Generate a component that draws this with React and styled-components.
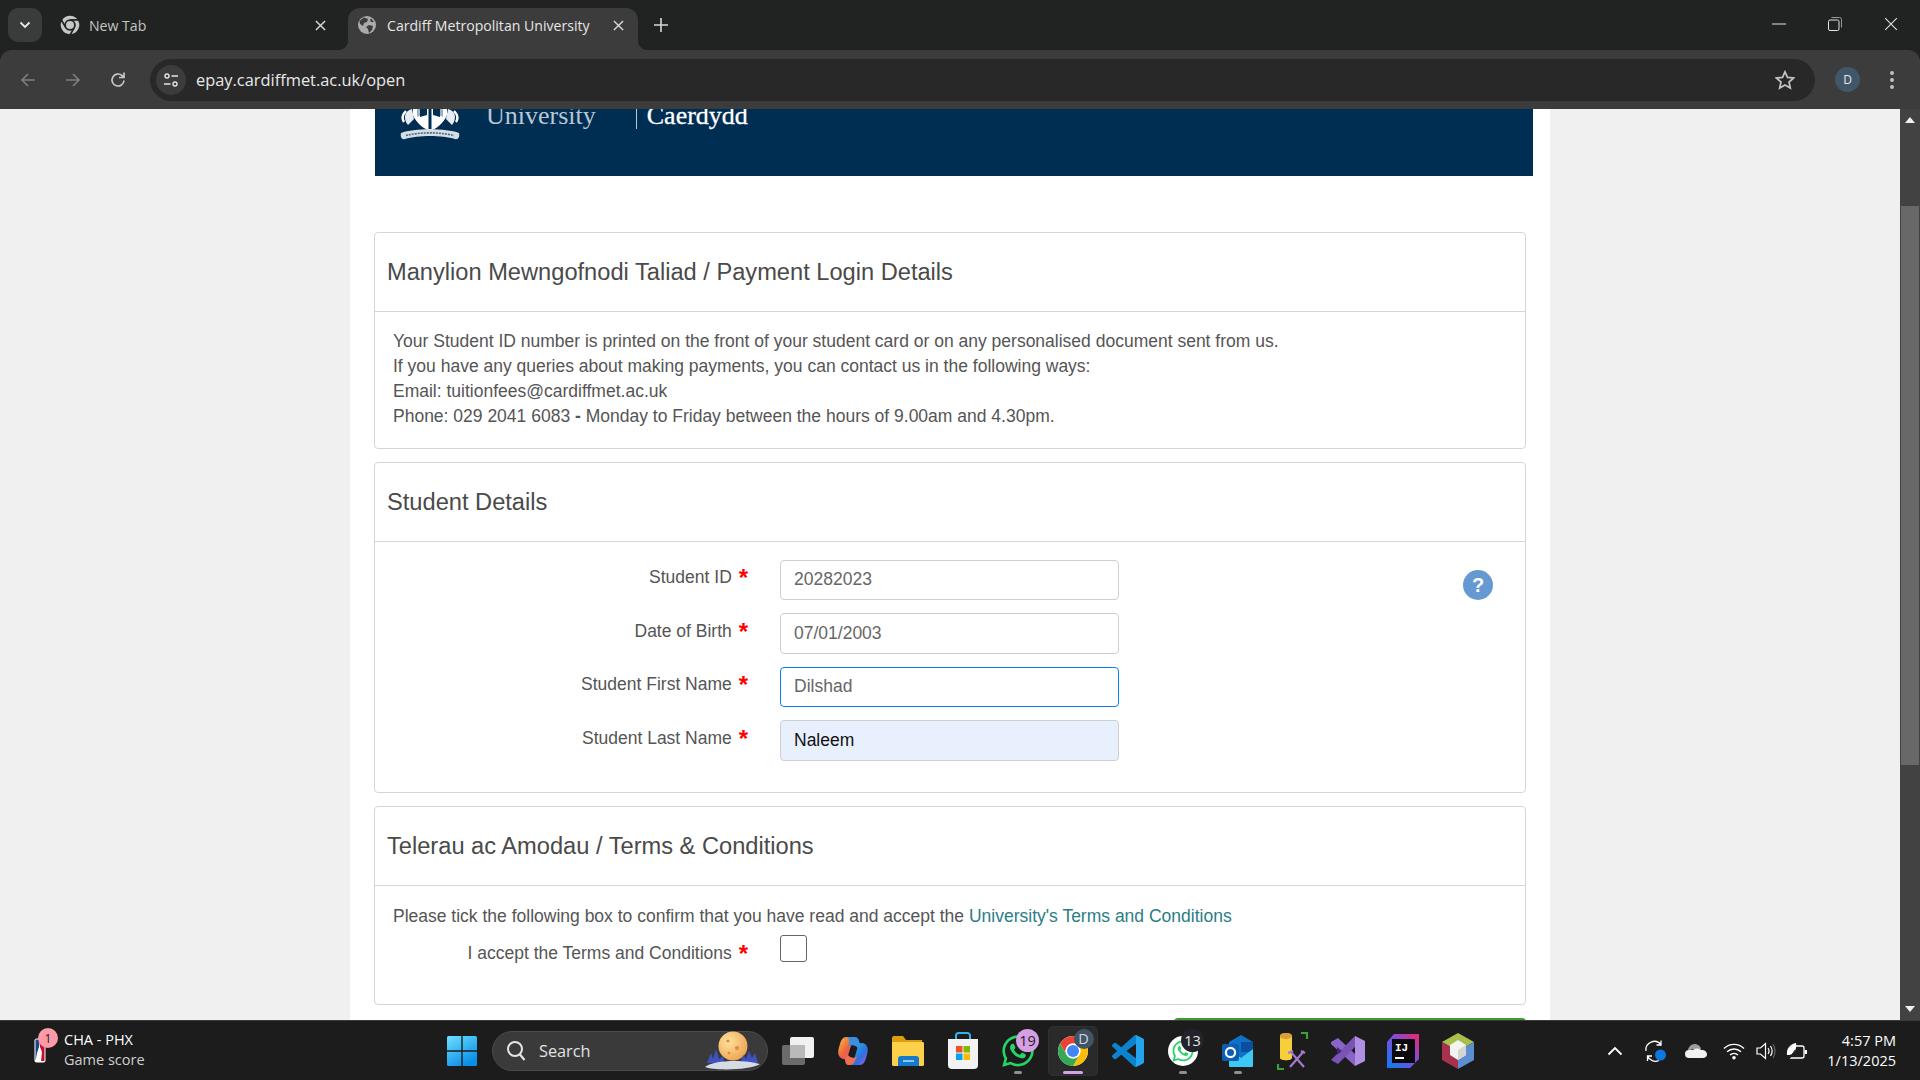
import styled, { createGlobalStyle } from "styled-components";
import { FaWhatsapp } from "react-icons/fa";

const GlobalStyle = createGlobalStyle`
  html, body {
    margin: 0;
    padding: 0;
    height: 100%;
    overflow: hidden;
    font-family: "Liberation Sans", Arial, sans-serif;
  }
  * { box-sizing: border-box; }
`;

const UI_FONT = `"Open Sans", "Noto Sans", sans-serif`;

/* ---------- small drawings ---------- */

function ChromeLogo({ size = 30, red = "#ea4335", yellow = "#fbbc04", green = "#34a853", blue = "#4285f4", ring = "#fff", seam }) {
  const sector = "M41.32 14A20 20 0 0 0 6.68 14L15.34 29A10 10 0 0 1 24 14Z";
  const seamProps = seam ? { stroke: ring, strokeWidth: seam } : {};
  return (
    <svg width={size} height={size} viewBox="0 0 48 48">
      <circle cx="24" cy="24" r="20" fill={ring} />
      <path d={sector} fill={red} {...seamProps} />
      <path d={sector} fill={yellow} transform="rotate(120 24 24)" {...seamProps} />
      <path d={sector} fill={green} transform="rotate(240 24 24)" {...seamProps} />
      <circle cx="24" cy="24" r="10" fill={ring} />
      <circle cx="24" cy="24" r="8" fill={blue} />
    </svg>
  );
}

function GlobeFavicon() {
  return (
    <svg width="18" height="18" viewBox="0 0 18 18">
      <circle cx="9" cy="9" r="9" fill="#a9abad" />
      <path d="M6 1.5 10 3 9 6 6 7 5 10 2 8 1.5 5ZM11 9l4 1-1 4-3 3-1-4-2-2ZM13 2.5 16 6l-3 0-1-2Z" fill="#3c3c3c" />
    </svg>
  );
}

function CloseX({ size = 11, color = "#d8d8d8", width = 1.6 }) {
  return (
    <svg width={size} height={size} viewBox="0 0 12 12">
      <path d="M1 1 11 11M11 1 1 11" stroke={color} strokeWidth={width} fill="none" />
    </svg>
  );
}

function Arrow({ flip, color = "#7d7d7d" }) {
  return (
    <svg width="18" height="18" viewBox="0 0 18 18" style={flip ? { transform: "scaleX(-1)" } : undefined}>
      <path d="M16 9H3M9 3 3 9l6 6" stroke={color} strokeWidth="1.7" fill="none" />
    </svg>
  );
}

function Crest() {
  return (
    <svg width="60" height="62" viewBox="0 0 60 62">
      <path d="M13 0H47V36C44 44 36 50 30 52 24 50 16 44 13 36Z" fill="#fff" />
      <path d="M30 0V50" stroke="#002d52" strokeWidth="3" />
      <path d="M17 22 26 30 26 34 17 38ZM43 22 34 30 34 34 43 38Z" fill="#9fb2c3" />
      <path d="M20 28 27 24V36L20 38ZM40 28 33 24V36L40 38Z" fill="#002d52" />
      <path d="M12 30C4 32 3 40 8 46L14 40ZM48 30C56 32 57 40 52 46L46 40Z" fill="#e6ecf1" />
      <path d="M6 32C2 36 2 40 4 43M54 32C58 36 58 40 56 43" stroke="#fff" strokeWidth="2.4" fill="none" />
      <path d="M1 54C14 49 46 49 59 54 60 58 58 61 55 60 42 56 18 56 5 60 2 61 0 58 1 54Z" fill="#d5dde4" />
      <path d="M6 56.5C20 53 40 53 54 56.5" stroke="#4c6a84" strokeWidth="1.6" strokeDasharray="2 1" fill="none" />
    </svg>
  );
}

function WindowsLogo() {
  return (
    <svg width="30" height="30" viewBox="0 0 30 30">
      <defs>
        <linearGradient id="win" x1="0" y1="0" x2="0.6" y2="1">
          <stop offset="0" stopColor="#6fe0ff" />
          <stop offset="1" stopColor="#0a8fe8" />
        </linearGradient>
      </defs>
      <path d="M0 1.5A1.5 1.5 0 0 1 1.5 0H14.3V14.3H0ZM15.7 0H28.5A1.5 1.5 0 0 1 30 1.5V14.3H15.7ZM0 15.7H14.3V30H1.5A1.5 1.5 0 0 1 0 28.5ZM15.7 15.7H30V28.5A1.5 1.5 0 0 1 28.5 30H15.7Z" fill="url(#win)" />
    </svg>
  );
}

function SearchGlass() {
  return (
    <svg width="20" height="22" viewBox="0 0 20 22">
      <circle cx="9" cy="9" r="7" stroke="#e4e4e4" strokeWidth="2" fill="none" />
      <path d="M14 14.5 18.5 20" stroke="#e4e4e4" strokeWidth="2.2" />
    </svg>
  );
}

function MoonScene() {
  return (
    <svg width="58" height="40" viewBox="0 0 58 40">
      <defs>
        <radialGradient id="moon" cx="0.35" cy="0.35" r="0.8">
          <stop offset="0" stopColor="#ffe29a" />
          <stop offset="1" stopColor="#eb9c4c" />
        </radialGradient>
      </defs>
      <circle cx="29" cy="15" r="14.5" fill="url(#moon)" />
      <circle cx="24" cy="10" r="1.6" fill="#dd8a45" />
      <circle cx="33" cy="17" r="2" fill="#dd8a45" />
      <circle cx="25" cy="22" r="1.3" fill="#dd8a45" />
      <path d="M3 32 7 22 9 28 12 18 15 28 19 25 21 33H36L39 24 42 28 45 20 48 27 51 22 54 32Z" fill="#3e53c0" />
      <path d="M1 36C8 29 40 28 56 33 48 39 10 40 1 36Z" fill="#d6dce6" />
    </svg>
  );
}

function TaskViewIcon() {
  return (
    <svg width="34" height="30" viewBox="0 0 34 30">
      <rect x="1" y="9" width="23" height="20" rx="2" fill="#6b6b6b" />
      <rect x="9" y="1" width="24" height="21" rx="2" fill="#f1f1f1" />
      <rect x="9" y="9" width="15" height="13" fill="#b9b9b9" />
    </svg>
  );
}

function CopilotIcon() {
  return (
    <svg width="32" height="32" viewBox="0 0 32 32">
      <defs>
        <linearGradient id="cpA" x1="0" y1="0" x2="1" y2="1">
          <stop offset="0" stopColor="#19c3e6" />
          <stop offset="0.6" stopColor="#2f6fe0" />
          <stop offset="1" stopColor="#a95ed8" />
        </linearGradient>
        <linearGradient id="cpB" x1="0" y1="0" x2="1" y2="1">
          <stop offset="0" stopColor="#f6c343" />
          <stop offset="0.5" stopColor="#f0653e" />
          <stop offset="1" stopColor="#d94f9a" />
        </linearGradient>
      </defs>
      <path d="M9 2H18C15 6 13 14 11 21 10 25 7 25 4 23 0 20 1 15 3 9 4 5 6 2 9 2Z" fill="url(#cpB)" />
      <path d="M14 30H23C26 30 28 27 29 23 31 17 32 12 28 9 25 7 22 8 21 11 19 18 17 26 14 30Z" fill="url(#cpA)" />
      <path d="M9 2H18C21 2 22 5 23 9L21 13C19 10 13 9 11 12 13 7 13 3 9 2Z" fill="#3b8fe0" />
      <path d="M14 30H11C9 30 8 27 8 24L11 20C13 23 18 24 20 21 18 26 17 29 14 30Z" fill="#ef6f53" />
    </svg>
  );
}

function ExplorerIcon() {
  return (
    <svg width="34" height="32" viewBox="0 0 34 32">
      <path d="M1 3A2 2 0 0 1 3 1H12L15 5H31V12H1Z" fill="#dc9e0c" />
      <path d="M1 7H32A1.5 1.5 0 0 1 33 8.5V30A1.5 1.5 0 0 1 31.5 31H2.5A1.5 1.5 0 0 1 1 29.5Z" fill="#fbd14b" />
      <path d="M7 24A3 3 0 0 1 10 21H25A3 3 0 0 1 28 24V31H7Z" fill="#1679c9" />
      <rect x="12" y="25" width="11" height="2" fill="#8cc6f0" />
    </svg>
  );
}

function StoreIcon() {
  return (
    <svg width="32" height="38" viewBox="0 0 32 38">
      <path d="M9 7V3.5A2.5 2.5 0 0 1 11.5 1H20.5A2.5 2.5 0 0 1 23 3.5V7" stroke="#2fb4ef" strokeWidth="2" fill="none" />
      <path d="M1 7H31V33A4 4 0 0 1 27 37H5A4 4 0 0 1 1 33Z" fill="#f3f3f3" />
      <rect x="9" y="14" width="6.5" height="6.5" fill="#f25022" />
      <rect x="16.5" y="14" width="6.5" height="6.5" fill="#7fba00" />
      <rect x="9" y="21.5" width="6.5" height="6.5" fill="#00a4ef" />
      <rect x="16.5" y="21.5" width="6.5" height="6.5" fill="#ffb900" />
    </svg>
  );
}

function VsCodeIcon() {
  return (
    <svg width="32" height="32" viewBox="0 0 24 24">
      <path fill="#0b83cf" d="M23.15 2.587 18.21.21a1.494 1.494 0 0 0-1.705.29l-9.46 8.63-4.12-3.128a.999.999 0 0 0-1.276.057L.327 7.261A1 1 0 0 0 .326 8.74L3.899 12 .326 15.26a1 1 0 0 0 .001 1.479L1.65 17.94a.999.999 0 0 0 1.276.057l4.12-3.128 9.46 8.63a1.492 1.492 0 0 0 1.704.29l4.942-2.377A1.5 1.5 0 0 0 24 20.06V3.939a1.5 1.5 0 0 0-.85-1.352zm-5.146 14.861L10.826 12l7.178-5.448v10.896z" />
      <path fill="#25a4ee" d="M18 0 23.15 2.587A1.5 1.5 0 0 1 24 3.939V20.06a1.5 1.5 0 0 1-.85 1.352L18 24Z" />
    </svg>
  );
}

function OutlookIcon() {
  return (
    <svg width="34" height="34" viewBox="0 0 34 34">
      <path d="M8 8 20 1 32 8V24H8Z" fill="#0f72c8" />
      <path d="M20 8H32V18H20Z" fill="#0b4f9c" />
      <path d="M8 15 20 24 32 15V31A1.5 1.5 0 0 1 30.5 33H9.5A1.5 1.5 0 0 1 8 31Z" fill="#3dc9f3" />
      <rect x="1" y="10" width="17" height="17" rx="2" fill="#0a5fb4" />
      <circle cx="9.5" cy="18.5" r="4.6" fill="none" stroke="#fff" strokeWidth="2.2" />
    </svg>
  );
}

function ToolIcon() {
  return (
    <svg width="32" height="40" viewBox="0 0 32 40">
      <path d="M3 5C3 1 15 1 15 5V27C15 30 3 30 3 27Z" fill="#f7cf3a" />
      <path d="M3 5C3 9 15 9 15 5 15 1 3 1 3 5Z" fill="#dc9e3a" />
      <path d="M24 2H30V8M1 33V38H7" stroke="#3fa03a" strokeWidth="2.2" fill="none" />
      <path d="M13 36 27 20M27 36 13 20M11 22 16 20M28 22 24 20" stroke="#a878d0" strokeWidth="2.2" fill="none" />
    </svg>
  );
}

function VsIcon() {
  return (
    <svg width="34" height="32" viewBox="0 0 34 32">
      <path d="M7 3 24 19 24 31 0 9 0 7Z" fill="#8a63c8" />
      <path d="M0 25 7 29 24 12 24 1Z" fill="#7a54b4" />
      <path d="M24 1 34 6V26L24 31Z" fill="#b18fe6" />
      <path d="M6 12 11 16 6 20Z" fill="#3f2a70" />
    </svg>
  );
}

function IdeaIcon() {
  return (
    <svg width="34" height="36" viewBox="0 0 34 36">
      <defs>
        <linearGradient id="ij" x1="0" y1="1" x2="1" y2="0">
          <stop offset="0" stopColor="#0a7cf0" />
          <stop offset="0.55" stopColor="#7b4fe0" />
          <stop offset="1" stopColor="#f0256a" />
        </linearGradient>
      </defs>
      <path d="M8 1H33V26L24 35H1V9Z" fill="url(#ij)" />
      <rect x="6" y="6" width="23" height="24" fill="#0b0b0d" />
      <text x="9" y="18" fill="#fff" fontSize="11" fontWeight="700" fontFamily="Liberation Mono, monospace">IJ</text>
      <rect x="9" y="24" width="9" height="2" fill="#fff" />
    </svg>
  );
}

function CubeIcon() {
  return (
    <svg width="32" height="36" viewBox="0 0 32 36">
      <path d="M16 0 32 9 16 18 0 9Z" fill="#a8bf4e" />
      <path d="M0 9 16 18V36L0 27Z" fill="#a8324d" />
      <path d="M32 9 16 18V36L32 27Z" fill="#5b8fd0" />
      <path d="M16 7 24 12V22L16 27 8 22V12Z" fill="#f3f3f0" />
      <path d="M16 17 24 12V22L16 27Z" fill="#d6d6d0" />
    </svg>
  );
}

function NbaLogo() {
  return (
    <svg width="12" height="25" viewBox="0 0 12 25">
      <rect x="0.5" y="0.5" width="11" height="24" rx="2" fill="#fff" />
      <path d="M1.5 1.5H6L5 9 3 15 1.5 23Z" fill="#1d428a" />
      <path d="M6 1.5H10.5V23H7L8 14 6 9Z" fill="#c8102e" />
    </svg>
  );
}

function TrayChevron() {
  return (
    <svg width="16" height="10" viewBox="0 0 16 10">
      <path d="M1.5 8.5 8 2l6.5 6.5" stroke="#fff" strokeWidth="1.8" fill="none" />
    </svg>
  );
}

function SyncIcon() {
  return (
    <svg width="22" height="22" viewBox="0 0 22 22">
      <path d="M1 11A8.5 8.5 0 0 1 16 4.5M16 0.5V5H11.5" stroke="#fff" strokeWidth="1.3" fill="none" />
      <path d="M14 20.5A8.5 8.5 0 0 1 2.5 16M2.5 21V16H7" stroke="#fff" strokeWidth="1.3" fill="none" />
      <circle cx="15.5" cy="15" r="5.5" fill="#0a78e0" />
    </svg>
  );
}

function CloudIcon() {
  return (
    <svg width="22" height="15" viewBox="0 0 22 15">
      <path d="M3 8C3 3 8 0 12 1.5 15 2.5 16 5 16 6H8Z" fill="#9c9c9c" />
      <path d="M4 15A4 4 0 0 1 4 7H8C10 5 14 5 16 7 20 6.5 22 9 22 11.5 22 13.5 20 15 18 15Z" fill="#f2f2f2" />
    </svg>
  );
}

function WifiIcon() {
  return (
    <svg width="22" height="18" viewBox="0 0 22 18">
      <path d="M1 6.5C6.5 1 15.5 1 21 6.5M4 9.8C8 6 14 6 18 9.8M7 13C9.3 10.9 12.7 10.9 15 13" stroke="#fff" strokeWidth="1.4" fill="none" />
      <circle cx="11" cy="15.8" r="1.8" fill="#fff" />
    </svg>
  );
}

function VolumeIcon() {
  return (
    <svg width="20" height="18" viewBox="0 0 20 18">
      <path d="M1 6H4.5L9.5 1.5V16.5L4.5 12H1Z" stroke="#fff" strokeWidth="1.2" fill="none" />
      <path d="M12 6C13.3 7.8 13.3 10.2 12 12M14.5 4C16.5 7 16.5 11 14.5 14" stroke="#fff" strokeWidth="1.2" fill="none" />
      <path d="M17 2C19.7 6 19.7 12 17 16" stroke="#666" strokeWidth="1.2" fill="none" />
    </svg>
  );
}

function BatteryIcon() {
  return (
    <svg width="22" height="18" viewBox="0 0 22 18">
      <path d="M7 4H16A2 2 0 0 1 18 6V14A2 2 0 0 1 16 16H4" stroke="#fff" strokeWidth="1.3" fill="none" />
      <rect x="18.6" y="8" width="2.4" height="4" fill="#fff" />
      <path d="M1 13C0 7 4 2 10 1 11 6 9 12 3 13Z" fill="#fff" />
      <path d="M9 8 4 16M11 9 8 14" stroke="#1c1c1c" strokeWidth="1" />
    </svg>
  );
}

/* ---------- data ---------- */

const studentFields = [
  { label: "Student ID", value: "20282023" },
  { label: "Date of Birth", value: "07/01/2003" },
  { label: "Student First Name", value: "Dilshad", focused: true },
  { label: "Student Last Name", value: "Naleem", autofilled: true },
];

/* ---------- component ---------- */

function App() {
  return (
    <Screen>
      <GlobalStyle />

      <TabStrip>
        <TabMenuButton>
          <svg width="12" height="8" viewBox="0 0 12 8">
            <path d="M1.5 1.5 6 6l4.5-4.5" stroke="#e8e8e8" strokeWidth="1.8" fill="none" />
          </svg>
        </TabMenuButton>
        <Tab>
          <ChromeLogo size={24} red="#c4c6c7" yellow="#c4c6c7" green="#c4c6c7" blue="#c4c6c7" ring="#212322" seam={3} />
          <TabTitle>New Tab</TabTitle>
          <CloseX />
        </Tab>
        <Tab $active>
          <GlobeFavicon />
          <TabTitle $active>Cardiff Metropolitan University</TabTitle>
          <CloseX />
        </Tab>
        <NewTabButton>
          <svg width="14" height="14" viewBox="0 0 14 14">
            <path d="M7 0V14M0 7H14" stroke="#d8d8d8" strokeWidth="1.6" />
          </svg>
        </NewTabButton>
        <WindowControls>
          <WindowButton>
            <svg width="14" height="2" viewBox="0 0 14 2"><path d="M0 1H14" stroke="#e4e4e4" strokeWidth="1" /></svg>
          </WindowButton>
          <WindowButton>
            <svg width="14" height="14" viewBox="0 0 14 14">
              <rect x="0.5" y="3" width="10.5" height="10.5" rx="1.5" stroke="#e4e4e4" fill="none" />
              <path d="M3.5 0.5H11.5A2 2 0 0 1 13.5 2.5V10.5" stroke="#999" fill="none" />
            </svg>
          </WindowButton>
          <WindowButton>
            <CloseX size={14} color="#e4e4e4" width={0.9} />
          </WindowButton>
        </WindowControls>
      </TabStrip>

      <Toolbar>
        <NavButton><Arrow /></NavButton>
        <NavButton><Arrow flip /></NavButton>
        <NavButton>
          <svg width="18" height="18" viewBox="0 0 18 18">
            <path d="M15 9.5A6 6 0 1 1 13 4.5L15 6.5M15 1.5V6.5H10" stroke="#c8c8c8" strokeWidth="1.7" fill="none" />
          </svg>
        </NavButton>
        <Omnibox>
          <SiteInfo>
            <svg width="16" height="16" viewBox="0 0 16 16">
              <circle cx="4" cy="4" r="2" stroke="#e4e4e4" strokeWidth="1.4" fill="none" />
              <path d="M8.5 4H15M1 12H7.5" stroke="#e4e4e4" strokeWidth="1.6" />
              <circle cx="12" cy="12" r="2" stroke="#e4e4e4" strokeWidth="1.4" fill="none" />
            </svg>
          </SiteInfo>
          <UrlText>epay.cardiffmet.ac.uk/open</UrlText>
          <svg width="20" height="20" viewBox="0 0 20 20">
            <path d="M10 1.8 12.5 7.4 18.6 8 14 12 15.3 18 10 14.9 4.7 18 6 12 1.4 8 7.5 7.4Z" stroke="#c4c4c4" strokeWidth="1.7" fill="none" />
          </svg>
        </Omnibox>
        <Avatar>D</Avatar>
        <MenuDots>
          <i /><i /><i />
        </MenuDots>
      </Toolbar>

      <Viewport>
        <Page>
          <Sheet>
            <Banner>
              <CrestClip><Crest /></CrestClip>
              <BannerWord>University</BannerWord>
              <BannerDivider />
              <BannerWord $strong>Caerdydd</BannerWord>
            </Banner>

            <Cards>
              <Card>
                <CardHeader>Manylion Mewngofnodi Taliad / Payment Login Details</CardHeader>
                <CardBody>
                  <InfoLine>Your Student ID number is printed on the front of your student card or on any personalised document sent from us.</InfoLine>
                  <InfoLine>If you have any queries about making payments, you can contact us in the following ways:</InfoLine>
                  <InfoLine>Email: tuitionfees@cardiffmet.ac.uk</InfoLine>
                  <InfoLine>Phone: 029 2041 6083 <b>-</b> Monday to Friday between the hours of 9.00am and 4.30pm.</InfoLine>
                </CardBody>
              </Card>

              <Card>
                <CardHeader>Student Details</CardHeader>
                <FormBody>
                  <HelpButton>?</HelpButton>
                  {studentFields.map((field) => (
                    <FieldRow key={field.label}>
                      <FieldLabel>
                        {field.label} <Required>*</Required>
                      </FieldLabel>
                      <TextField $focused={field.focused} $autofilled={field.autofilled}>
                        {field.value}
                      </TextField>
                    </FieldRow>
                  ))}
                </FormBody>
              </Card>

              <Card>
                <CardHeader>Telerau ac Amodau / Terms &amp; Conditions</CardHeader>
                <TermsBody>
                  <InfoLine>
                    Please tick the following box to confirm that you have read and accept the{" "}
                    <TermsLink>University's Terms and Conditions</TermsLink>
                  </InfoLine>
                  <AcceptRow>
                    <AcceptLabel>
                      I accept the Terms and Conditions <Required>*</Required>
                    </AcceptLabel>
                    <CheckBox />
                  </AcceptRow>
                </TermsBody>
              </Card>

              <SubmitPeek />
            </Cards>
          </Sheet>
        </Page>
        <Scrollbar>
          <ScrollArrow />
          <ScrollTrack>
            <ScrollThumb />
          </ScrollTrack>
          <ScrollArrow $down />
        </Scrollbar>
      </Viewport>

      <Taskbar>
        <WeatherWidget>
          <NbaBox>
            <NbaLogo />
            <NbaBadge>1</NbaBadge>
          </NbaBox>
          <WidgetText>
            <WidgetTitle>CHA - PHX</WidgetTitle>
            <WidgetSub>Game score</WidgetSub>
          </WidgetText>
        </WeatherWidget>

        <TaskIcon><WindowsLogo /></TaskIcon>
        <SearchPill>
          <SearchGlass />
          <SearchLabel>Search</SearchLabel>
          <MoonScene />
        </SearchPill>
        <TaskIcon><TaskViewIcon /></TaskIcon>
        <TaskIcon><CopilotIcon /></TaskIcon>
        <TaskIcon><ExplorerIcon /></TaskIcon>
        <TaskIcon><StoreIcon /></TaskIcon>
        <TaskIcon $running>
          <FaWhatsapp size={36} color="#25d366" />
          <IconBadge $bg="#d79fe3">19</IconBadge>
        </TaskIcon>
        <TaskIcon $active>
          <ChromeLogo size={36} />
          <IconBadge $bg="#3f5566" $color="#cfd6dc" $size={20} $right={4}>D</IconBadge>
        </TaskIcon>
        <TaskIcon><VsCodeIcon /></TaskIcon>
        <TaskIcon $running>
          <WhatsAppTile><FaWhatsapp size={24} color="#25d366" /></WhatsAppTile>
          <IconBadge $bg="#23232b" $color="#e8e8e8">13</IconBadge>
        </TaskIcon>
        <TaskIcon $running><OutlookIcon /></TaskIcon>
        <TaskIcon><ToolIcon /></TaskIcon>
        <TaskIcon><VsIcon /></TaskIcon>
        <TaskIcon><IdeaIcon /></TaskIcon>
        <TaskIcon><CubeIcon /></TaskIcon>

        <Tray>
          <TrayItem $width={42}><TrayChevron /></TrayItem>
          <TrayItem $width={40}><SyncIcon /></TrayItem>
          <TrayItem $width={40}><CloudIcon /></TrayItem>
          <TrayItem $width={35}><WifiIcon /></TrayItem>
          <TrayItem $width={29}><VolumeIcon /></TrayItem>
          <TrayItem $width={34}><BatteryIcon /></TrayItem>
          <Clock>
            <span>4:57 PM</span>
            <span>1/13/2025</span>
          </Clock>
        </Tray>
      </Taskbar>
    </Screen>
  );
}

/* ---------- browser chrome ---------- */

const Screen = styled.div`
  width: 1920px;
  height: 1080px;
  display: flex;
  flex-direction: column;
  overflow: hidden;
  background: #212322;
`;

const TabStrip = styled.div`
  height: 50px;
  flex-shrink: 0;
  display: flex;
  align-items: flex-end;
  padding-left: 8px;
  background: #212322;
`;

const TabMenuButton = styled.div`
  width: 34px;
  height: 34px;
  margin-bottom: 8px;
  margin-right: 8px;
  border-radius: 10px;
  background: #3a3b3b;
  display: flex;
  align-items: center;
  justify-content: center;
`;

const Tab = styled.div`
  position: relative;
  width: 290px;
  height: 42px;
  margin-right: 8px;
  padding: 0 14px 8px ${(p) => (p.$active ? "10px" : "8px")};
  display: flex;
  align-items: center;
  gap: ${(p) => (p.$active ? "11px" : "7px")};
  border-radius: 12px 12px 0 0;
  background: ${(p) => (p.$active ? "#3c3c3c" : "transparent")};
  ${(p) =>
    p.$active &&
    `
    &::before, &::after {
      content: "";
      position: absolute;
      bottom: 0;
      width: 10px;
      height: 10px;
    }
    &::before {
      left: -10px;
      background: radial-gradient(circle at 0 0, transparent 10px, #3c3c3c 10.5px);
    }
    &::after {
      right: -10px;
      background: radial-gradient(circle at 100% 0, transparent 10px, #3c3c3c 10.5px);
    }
  `}
`;

const TabTitle = styled.div`
  flex: 1;
  overflow: hidden;
  white-space: nowrap;
  font-family: ${UI_FONT};
  font-size: 14.1px;
  color: ${(p) => (p.$active ? "#e6e6e6" : "#c4c4c4")};
`;

const NewTabButton = styled.div`
  width: 30px;
  height: 50px;
  display: flex;
  align-items: center;
  justify-content: center;
`;

const WindowControls = styled.div`
  margin-left: auto;
  height: 50px;
  display: flex;
  padding-right: 1px;
`;

const WindowButton = styled.div`
  width: 56px;
  height: 48px;
  display: flex;
  align-items: center;
  justify-content: center;
`;

const Toolbar = styled.div`
  height: 59px;
  flex-shrink: 0;
  display: flex;
  align-items: center;
  padding-left: 5px;
  border-radius: 12px 12px 0 0;
  background: #3c3c3c;
`;

const NavButton = styled.div`
  width: 45px;
  height: 40px;
  display: flex;
  align-items: center;
  justify-content: center;
`;

const Omnibox = styled.div`
  width: 1665px;
  height: 42px;
  margin-left: 10px;
  padding: 0 20px 0 6px;
  display: flex;
  align-items: center;
  border-radius: 21px;
  background: #282828;
`;

const SiteInfo = styled.div`
  width: 30px;
  height: 30px;
  border-radius: 50%;
  background: #3c3c3c;
  display: flex;
  align-items: center;
  justify-content: center;
`;

const UrlText = styled.div`
  flex: 1;
  margin-left: 10px;
  font-family: ${UI_FONT};
  font-size: 16.4px;
  color: #e8e8e8;
`;

const Avatar = styled.div`
  width: 25px;
  height: 25px;
  margin-left: 20px;
  border-radius: 50%;
  background: #40576a;
  color: #e6e6e6;
  font-family: ${UI_FONT};
  font-size: 12px;
  display: flex;
  align-items: center;
  justify-content: center;
`;

const MenuDots = styled.div`
  margin-left: 30px;
  display: flex;
  flex-direction: column;
  gap: 3px;
  i {
    width: 4px;
    height: 4px;
    border-radius: 50%;
    background: #c0c0c0;
  }
`;

/* ---------- page ---------- */

const Viewport = styled.div`
  flex: 1;
  min-height: 0;
  display: flex;
`;

const Page = styled.div`
  flex: 1;
  background: #f0f0f0;
  overflow: hidden;
  display: flex;
  justify-content: center;
`;

const Sheet = styled.div`
  width: 1200px;
  height: 100%;
  padding: 0 17px 0 25px;
  background: #fff;
  overflow: hidden;
`;

const Banner = styled.div`
  height: 67px;
  padding-left: 25px;
  display: flex;
  align-items: flex-start;
  overflow: hidden;
  background: #002d52;
`;

const CrestClip = styled.div`
  margin-top: -30px;
  flex-shrink: 0;
`;

const BannerWord = styled.div`
  margin: ${(p) => (p.$strong ? "-10px 0 0 10px" : "-10px 0 0 26px")};
  font-family: "Liberation Serif", serif;
  font-size: 26px;
  line-height: 34px;
  -webkit-text-stroke: ${(p) => (p.$strong ? "0.3px #fff" : "0")};
  color: ${(p) => (p.$strong ? "#fff" : "#bac7d4")};
`;

const BannerDivider = styled.div`
  width: 1px;
  height: 20px;
  margin-left: 40px;
  background: #bac7d4;
`;

const Cards = styled.div`
  margin: 56px 7px 0 -1px;
  display: flex;
  flex-direction: column;
  gap: 13px;
`;

const Card = styled.section`
  border: 1px solid #d6d6d6;
  border-radius: 4px;
  background: #fff;
`;

const CardHeader = styled.h3`
  margin: 0;
  height: 79px;
  padding: 0 12px;
  display: flex;
  align-items: center;
  border-bottom: 1px solid #d6d6d6;
  font-size: 23.65px;
  font-weight: 400;
  color: #4a4a4a;
`;

const CardBody = styled.div`
  padding: 17px 18px 19px;
`;

const InfoLine = styled.div`
  font-size: 17.5px;
  line-height: 25px;
  color: #555;
  b {
    font-weight: 700;
  }
`;

const FormBody = styled.div`
  position: relative;
  padding: 17.5px 0 31.5px;
  display: flex;
  flex-direction: column;
  gap: 13px;
`;

const FieldRow = styled.div`
  display: grid;
  grid-template-columns: 373px 339px;
  column-gap: 32px;
  align-items: center;
`;

const FieldLabel = styled.label`
  padding-bottom: 4px;
  text-align: right;
  font-size: 17.5px;
  line-height: 25px;
  color: #555;
`;

const AcceptLabel = styled(FieldLabel)`
  padding: 6px 0 0;
`;

const Required = styled.span`
  margin-left: 2px;
  font-size: 24px;
  font-weight: 700;
  line-height: 20px;
  vertical-align: -3px;
  color: #f00;
`;

const TextField = styled.div`
  height: 40.5px;
  padding: 0 13px;
  display: flex;
  align-items: center;
  border-radius: 4px;
  border: 1px solid ${(p) => (p.$focused ? "#0d7ef2" : "#cfcfcf")};
  background: ${(p) => (p.$autofilled ? "#e8f0fe" : "#fff")};
  font-size: 17.5px;
  color: ${(p) => (p.$autofilled ? "#111" : "#666")};
`;

const HelpButton = styled.div`
  position: absolute;
  top: 28px;
  right: 32px;
  width: 30px;
  height: 30px;
  border-radius: 50%;
  background: #6699d2;
  color: #fff;
  font-size: 20px;
  font-weight: 700;
  display: flex;
  align-items: center;
  justify-content: center;
`;

const TermsBody = styled.div`
  padding: 18px 18px 38px;
`;

const TermsLink = styled.a`
  color: #2a7d84;
`;

const AcceptRow = styled.div`
  margin: 5.5px 0 0 -18px;
  display: grid;
  grid-template-columns: 373px 27px;
  column-gap: 32px;
  align-items: start;
`;

const CheckBox = styled.div`
  width: 27px;
  height: 27px;
  border: 1px solid #666;
  border-radius: 3px;
  background: #fff;
`;

const SubmitPeek = styled.div`
  align-self: flex-end;
  width: 352px;
  height: 40px;
  border-radius: 4px 4px 0 0;
  background: #3e9c35;
`;

const Scrollbar = styled.div`
  width: 20px;
  display: flex;
  flex-direction: column;
  background: #424242;
`;

const ScrollArrow = styled.div`
  height: 22px;
  display: flex;
  align-items: center;
  justify-content: center;
  &::before {
    content: "";
    border-left: 5px solid transparent;
    border-right: 5px solid transparent;
    border-${(p) => (p.$down ? "top" : "bottom")}: 6px solid #f0f0f0;
  }
`;

const ScrollTrack = styled.div`
  flex: 1;
  padding-top: 75px;
`;

const ScrollThumb = styled.div`
  height: 559px;
  margin: 0 1px;
  background: #686868;
`;

/* ---------- taskbar ---------- */

const Taskbar = styled.div`
  height: 60px;
  flex-shrink: 0;
  display: flex;
  align-items: center;
  border-top: 1px solid #3a3a3a;
  background: #1c1c1c;
`;

const WeatherWidget = styled.div`
  width: 434px;
  padding-left: 34px;
  display: flex;
  align-items: center;
  gap: 18px;
`;

const NbaBox = styled.div`
  position: relative;
  width: 12px;
  height: 25px;
  display: flex;
`;

const NbaBadge = styled.div`
  position: absolute;
  top: -10px;
  left: 4px;
  width: 20px;
  height: 20px;
  border-radius: 50%;
  background: #ff9aa8;
  color: #1c1c1c;
  font-family: ${UI_FONT};
  font-size: 12px;
  display: flex;
  align-items: center;
  justify-content: center;
`;

const WidgetText = styled.div`
  display: flex;
  flex-direction: column;
  margin-top: -1px;
  font-family: ${UI_FONT};
  font-size: 14.5px;
  line-height: 20px;
`;

const WidgetTitle = styled.div`
  color: #fff;
`;

const WidgetSub = styled.div`
  color: #cfcfcf;
`;

const TaskIcon = styled.div`
  position: relative;
  width: 55px;
  height: 50px;
  flex-shrink: 0;
  display: flex;
  align-items: center;
  justify-content: center;
  border-radius: 5px;
  ${(p) => p.$active && "background: #2a2a2a; outline: 1px solid #303030; outline-offset: -1px; width: 50px; margin: 0 2.5px;"}
  &::after {
    content: "";
    display: ${(p) => (p.$running || p.$active ? "block" : "none")};
    position: absolute;
    bottom: 2px;
    left: 50%;
    transform: translateX(-50%);
    width: ${(p) => (p.$active ? "20px" : "8px")};
    height: 3px;
    border-radius: 2px;
    background: ${(p) => (p.$active ? "#d3a3e6" : "#8f8f8f")};
  }
`;

const IconBadge = styled.div`
  position: absolute;
  top: 3px;
  right: ${(p) => p.$right ?? 6}px;
  width: ${(p) => p.$size ?? 23}px;
  height: ${(p) => p.$size ?? 23}px;
  border-radius: 50%;
  background: ${(p) => p.$bg};
  color: ${(p) => p.$color || "#1c1c1c"};
  font-family: ${UI_FONT};
  font-size: 14.5px;
  display: flex;
  align-items: center;
  justify-content: center;
`;

const WhatsAppTile = styled.div`
  width: 30px;
  height: 30px;
  border-radius: 50%;
  background: #fff;
  display: flex;
  align-items: center;
  justify-content: center;
`;

const SearchPill = styled.div`
  width: 276px;
  height: 40px;
  margin: 0 2px 0 3px;
  flex-shrink: 0;
  padding: 0 5px 0 13px;
  display: flex;
  align-items: center;
  gap: 13px;
  border-radius: 20px;
  border: 1px solid #4a4a4a;
  background: #3a3a3a;
`;

const SearchLabel = styled.div`
  flex: 1;
  font-family: ${UI_FONT};
  font-size: 16.3px;
  color: #e2e2e2;
`;

const Tray = styled.div`
  margin-left: auto;
  padding-right: 24px;
  display: flex;
  align-items: center;
`;

const TrayItem = styled.div`
  width: ${(p) => p.$width}px;
  display: flex;
  align-items: center;
  justify-content: center;
`;

const Clock = styled.div`
  margin-left: 13px;
  display: flex;
  flex-direction: column;
  align-items: flex-end;
  font-family: ${UI_FONT};
  font-size: 14.5px;
  line-height: 20px;
  color: #fff;
`;

export default App;
